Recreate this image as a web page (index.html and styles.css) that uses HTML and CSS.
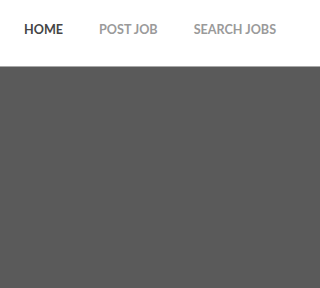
FILE: index.html
```html
<!DOCTYPE html>
<html>
<head>
<meta charset="utf-8">
<link rel="stylesheet" href="styles.css">
</head>
<body>
<nav class="nav">
  <a class="nav-link active" href="#">HOME</a>
  <a class="nav-link" href="#">POST JOB</a>
  <a class="nav-link" href="#">SEARCH JOBS</a>
</nav>
<main class="hero"></main>
</body>
</html>
```

FILE: styles.css
```css
html, body {
  margin: 0;
  padding: 0;
  height: 100%;
}
body {
  display: flex;
  flex-direction: column;
  background: #ffffff;
  font-family: Lato, "Open Sans", sans-serif;
  overflow: hidden;
}
.nav {
  height: 66px;
  display: flex;
  align-items: center;
  gap: 36px;
  padding: 0 0 0 24px;
  white-space: nowrap;
  box-sizing: border-box;
}
.nav-link {
  font-size: 12.6px;
  font-weight: 700;
  color: #9a9a9a;
  text-decoration: none;
  line-height: 16px;
  padding-bottom: 7px;
}
.nav-link.active {
  color: #454545;
}
.hero {
  flex: 1;
  background: #5a5a5a;
  border-top: 1px solid #a8a8a8;
}
```
